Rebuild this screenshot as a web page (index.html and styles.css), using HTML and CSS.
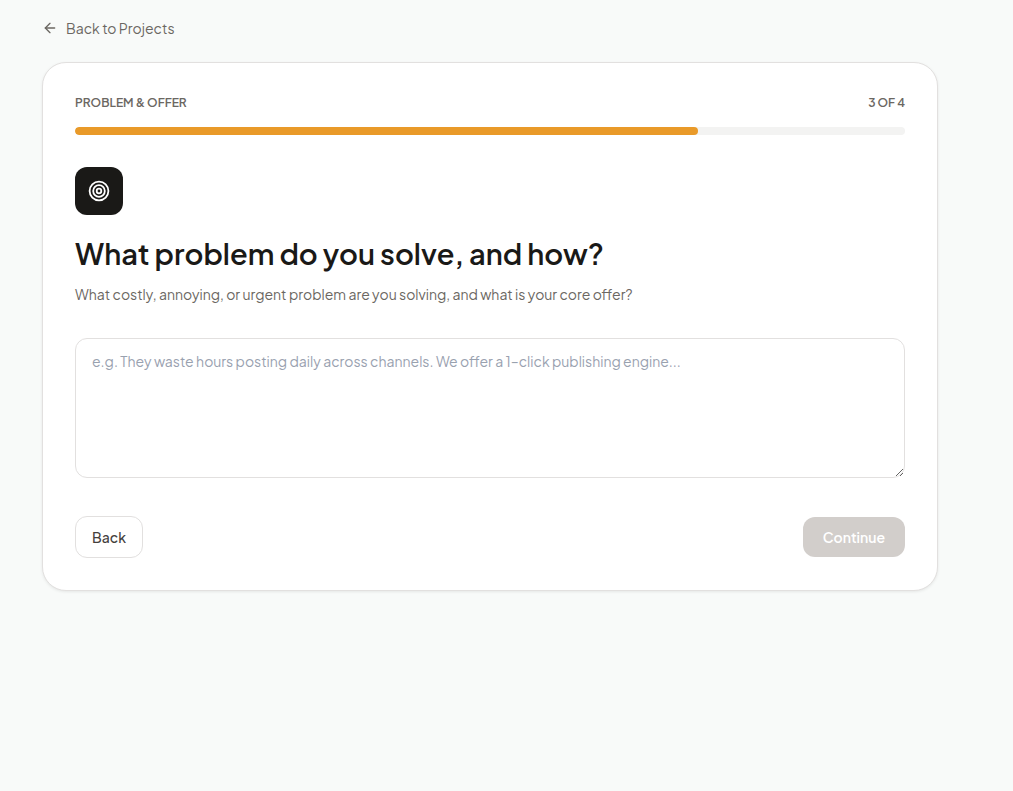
FILE: index.html
```html
<!DOCTYPE html>
<html lang="en">
<head>
<meta charset="utf-8">
<meta name="viewport" content="width=device-width, initial-scale=1">
<title>Problem &amp; Offer</title>
<link rel="stylesheet" href="styles.css">
</head>
<body>
<main class="page">
  <a class="back-link" href="#">
    <svg class="back-icon" viewBox="0 0 24 24" fill="none" stroke="currentColor" stroke-width="2" stroke-linecap="round" stroke-linejoin="round" aria-hidden="true"><path d="m12 19-7-7 7-7"/><path d="M19 12H5"/></svg>
    Back to Projects
  </a>
  <form class="card">
    <div class="step-row">
      <span>PROBLEM &amp; OFFER</span>
      <span>3 OF 4</span>
    </div>
    <div class="progress" role="progressbar" aria-label="Progress" aria-valuemin="0" aria-valuemax="4" aria-valuenow="3">
      <div class="progress-fill" style="width: 75%"></div>
    </div>
    <div class="badge">
      <svg class="badge-icon" viewBox="0 0 22 22" fill="none" stroke="currentColor" stroke-width="1.8" aria-hidden="true"><circle cx="11" cy="11" r="9.4"/><circle cx="11" cy="11" r="5.8"/><circle cx="11" cy="11" r="2.3"/></svg>
    </div>
    <h1 class="title"><label for="answer">What problem do you solve, and how?</label></h1>
    <p class="subtitle" id="hint">What costly, annoying, or urgent problem are you solving, and what is your core offer?</p>
    <textarea class="answer" id="answer" aria-describedby="hint" placeholder="e.g. They waste hours posting daily across channels. We offer a 1–click publishing engine..."></textarea>
    <div class="actions">
      <button class="button button-outline" type="button">Back</button>
      <button class="button button-primary" type="submit" disabled>Continue</button>
    </div>
  </form>
</main>
</body>
</html>
```
FILE: styles.css
```css
* { box-sizing: border-box; }

body {
  margin: 0;
  background: #f8faf9;
  color: #1a1917;
  font-family: "Plus Jakarta Sans", Inter, "Liberation Sans", sans-serif;
  font-size: 14px;
  line-height: 20px;
}

.page {
  max-width: 1013px;
  padding: 18px 75px 40px 42px;
}

.back-link {
  display: flex;
  align-items: center;
  gap: 8px;
  width: fit-content;
  color: #6b6762;
  text-decoration: none;
}

.back-icon { width: 16px; height: 16px; }

.card {
  margin-top: 24px;
  padding: 32px;
  background: #fff;
  border: 1px solid #e2e0df;
  border-radius: 24px;
  box-shadow: 0 1px 3px rgba(0, 0, 0, 0.08);
}

.step-row {
  display: flex;
  justify-content: space-between;
  margin-bottom: 16px;
  color: #6b6762;
  font-size: 12px;
  font-weight: 600;
  line-height: 16px;
}

.progress {
  height: 8px;
  border-radius: 4px;
  background: #f3f3f2;
  overflow: hidden;
}

.progress-fill {
  height: 100%;
  border-radius: 4px;
  background: #e99a29;
}

.badge {
  display: flex;
  align-items: center;
  justify-content: center;
  width: 48px;
  height: 48px;
  margin-top: 32px;
  border-radius: 12px;
  background: #1a1917;
  color: #fff;
}

.badge-icon { width: 22px; height: 22px; }

.title {
  margin: 20px 0 12px;
  font-size: 29px;
  font-weight: 600;
  line-height: 36px;
}

.subtitle {
  margin: 0;
  color: #6b6762;
  line-height: 22px;
}

.answer {
  display: block;
  width: 100%;
  height: 140px;
  margin-top: 33px;
  padding: 12px 16px;
  border: 1px solid #e2e0df;
  border-radius: 12px;
  background: #fff;
  color: #1a1917;
  font: inherit;
  line-height: 20px;
  resize: vertical;
}

.answer::placeholder { color: #99a1af; opacity: 1; }

.actions {
  display: flex;
  align-items: center;
  justify-content: space-between;
  margin-top: 38px;
}

.button {
  height: 40px;
  padding: 0 20px;
  border: 0;
  border-radius: 12px;
  font: inherit;
  font-weight: 500;
}

.button-outline {
  height: 42px;
  padding: 0 16px;
  border: 1px solid #e2e0df;
  background: #fff;
  color: #44403c;
}

.button-primary {
  background: #d2cecb;
  color: #fff;
  font-weight: 600;
}
```
